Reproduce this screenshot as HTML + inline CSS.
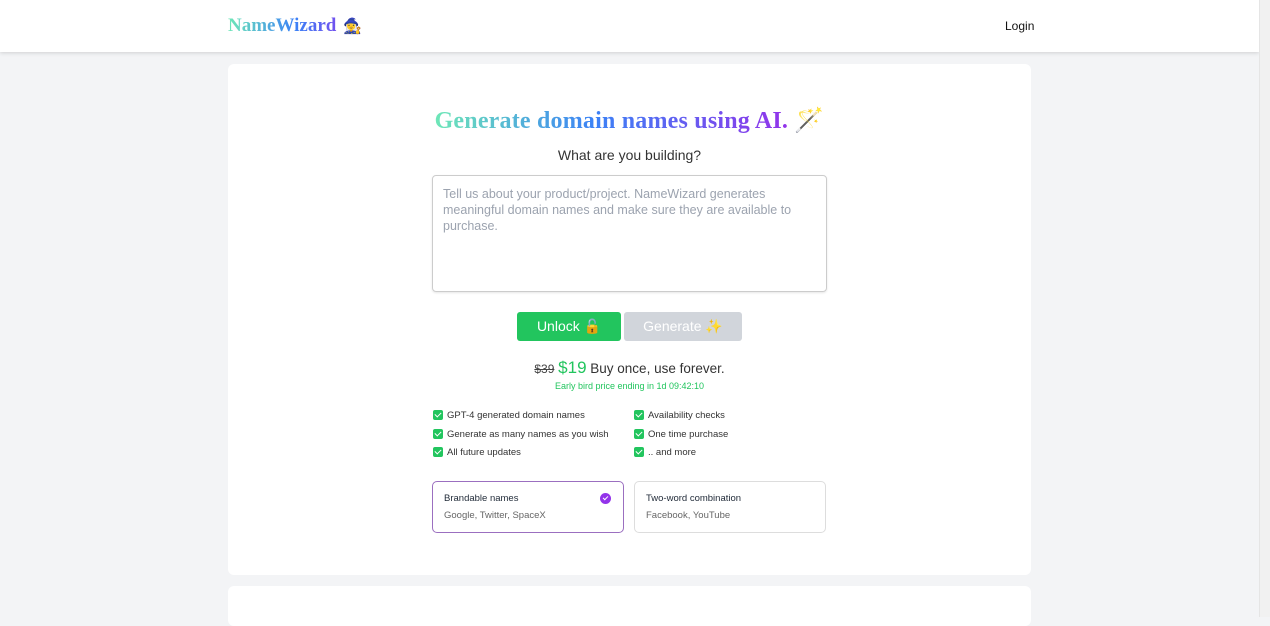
<!DOCTYPE html>
<html><head><meta charset="utf-8"><style>
*{box-sizing:border-box;margin:0;padding:0}
body{width:1270px;height:617px;overflow:hidden;background:#f3f4f6;font-family:"Liberation Sans",sans-serif;position:relative;color:#1f2937}
.sb{position:absolute;right:0;top:0;width:11px;height:617px;background:#f1f1f1;border-left:1px solid #e5e5e5}
header{position:absolute;left:0;top:0;width:1259px;height:52px;background:#fff;box-shadow:0 1px 4px rgba(0,0,0,.15)}
.logo{position:absolute;left:228px;top:15px;font-family:"Liberation Serif",serif;font-weight:bold;font-size:19px;background:linear-gradient(90deg,#6ee7b7,#3b82f6,#9333ea);-webkit-background-clip:text;color:transparent}
.login{position:absolute;left:1005px;top:19px;font-size:12px;color:#111}
.card{position:absolute;left:228px;top:64px;width:803px;height:511px;background:#fff;border-radius:6px}
.card2{position:absolute;left:228px;top:586px;width:803px;height:40px;background:#fff;border-radius:6px}
h1{position:absolute;left:0;width:803px;top:42px;text-align:center;font-family:"Liberation Serif",serif;font-size:24px;font-weight:bold;letter-spacing:0.2px}
h1 span.g{background:linear-gradient(90deg,#6ee7b7,#3b82f6 45%,#9333ea);-webkit-background-clip:text;color:transparent}
.q{position:absolute;left:0;width:803px;top:83px;text-align:center;font-size:14px;color:#333}
.ta{position:absolute;left:204px;top:111px;width:395px;height:117px;border:1px solid #ccc;border-radius:4px;padding:10px;font-size:12.5px;line-height:16px;color:#9ca3af;box-shadow:0 1px 2px rgba(0,0,0,.1)}
.b1{position:absolute;left:289px;top:248px;width:104px;height:29px;background:#22c55e;color:#fff;border-radius:3px;font-size:14px;text-align:center;line-height:29px}
.b2{position:absolute;left:396px;top:248px;width:118px;height:29px;background:#d1d5db;color:#fff;border-radius:3px;font-size:14px;text-align:center;line-height:29px}
.price{position:absolute;left:0;width:803px;top:294px;text-align:center;font-size:13.5px;color:#333}
.price s{color:#444;font-size:12px}.price b{color:#22c55e;font-weight:normal;font-size:17px}
.early{position:absolute;left:0;width:803px;top:317px;text-align:center;font-size:9px;color:#22c55e}
.f{position:absolute;font-size:9.5px;color:#333;line-height:12px}
.f i{display:inline-block;width:10px;height:10px;background:#22c55e;border-radius:2px;vertical-align:-2px;margin-right:4px;position:relative}
.f i:after{content:"";position:absolute;left:3px;top:1px;width:3px;height:5px;border:solid #fff;border-width:0 1.5px 1.5px 0;transform:rotate(45deg)}
.opt{position:absolute;top:417px;width:192px;height:52px;border:1px solid #ddd;border-radius:5px;padding:11px 11px;font-size:9.5px}
.opt .s{color:#666;margin-top:6px}
.chk{position:absolute;right:12px;top:11px;width:11px;height:11px;border-radius:50%;background:#9333ea}
.chk:after{content:"";position:absolute;left:4px;top:2px;width:2px;height:4px;border:solid #fff;border-width:0 1.3px 1.3px 0;transform:rotate(45deg)}
</style></head><body>
<header><div class="logo">NameWizard <span style="color:initial;-webkit-text-fill-color:initial;font-size:15px;margin-left:2px">🧙‍♀️</span></div><div class="login">Login</div></header>
<div class="card">
<h1><span class="g">Generate domain names using AI.</span> 🪄</h1>
<div class="q">What are you building?</div>
<div class="ta">Tell us about your product/project. NameWizard generates meaningful domain names and make sure they are available to purchase.</div>
<div class="b1">Unlock 🔓</div><div class="b2">Generate ✨</div>
<div class="price"><s>$39</s> <b>$19</b> Buy once, use forever.</div>
<div class="early">Early bird price ending in 1d 09:42:10</div>
<div class="f" style="left:205px;top:346px"><i></i>GPT-4 generated domain names</div>
<div class="f" style="left:205px;top:365px"><i></i>Generate as many names as you wish</div>
<div class="f" style="left:205px;top:383px"><i></i>All future updates</div>
<div class="f" style="left:406px;top:346px"><i></i>Availability checks</div>
<div class="f" style="left:406px;top:365px"><i></i>One time purchase</div>
<div class="f" style="left:406px;top:383px"><i></i>.. and more</div>
<div class="opt" style="left:204px;border-color:#9b6fc0">Brandable names<div class="s">Google, Twitter, SpaceX</div><div class="chk"></div></div>
<div class="opt" style="left:406px">Two-word combination<div class="s">Facebook, YouTube</div></div>
</div>
<div class="card2"></div>
<div class="sb"></div>
</body></html>
